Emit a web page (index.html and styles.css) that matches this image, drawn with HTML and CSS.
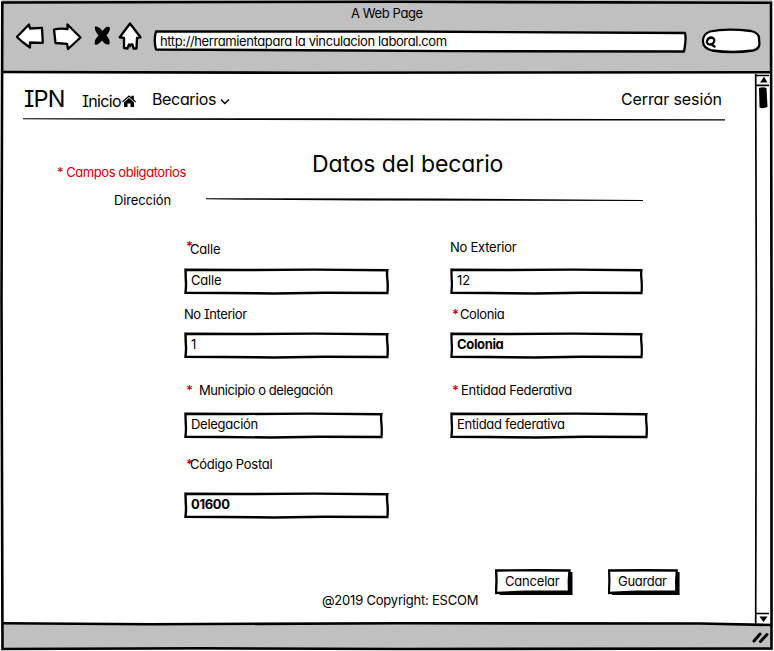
FILE: index.html
```html
<!DOCTYPE html>
<html lang="es">
<head>
<meta charset="utf-8">
<title>Datos del becario</title>
<link rel="stylesheet" href="styles.css">
</head>
<body>
<svg class="defs" width="0" height="0">
  <symbol id="box" viewBox="0 0 205 27" preserveAspectRatio="none">
    <path class="sketch" d="M1.500 1.800 L60 2 L130 1.600 L203.300 2.200 Q202.700 6 203.500 13 Q204 19 203.400 25 L140 24.800 L90 25.500 L40 25 L1.500 24.800 Q2.400 16 1.800 12 Z"/>
  </symbol>
  <symbol id="btn" viewBox="0 0 78 26" preserveAspectRatio="none">
    <path d="M4 4 L77.500 3 V26 H4.500 Z"/>
    <path class="sketch" d="M1.200 1.500 L40 1.200 L74.500 1.500 L73.800 12 L74 22.500 L30 22.700 L1 24 L1.500 12 Z"/>
  </symbol>
</svg>
<div class="browser">
  <header class="chrome">
    <div class="title"><span class="t t-title">A Web Page</span></div>
    <div class="toolbar">
      <svg class="tools" viewBox="0 0 142 30" width="142" height="30">
        <path class="ink" d="M.8 15 L13 2.500 L14 6.500 L26 5.800 L26.800 20.800 L14 20.500 L14 25.500 L6.500 20 Z"/>
        <path class="ink" d="M38 7.500 Q44 6 51.500 7 L51.500 2.500 L64.500 15.500 L52 27 L51 21.800 L39.500 21 Z"/>
        <path d="M79 4.500 Q83 4 86.500 9 Q90 3.500 93.500 5 Q95 8 90.500 13.500 Q94.500 18 93.500 22 Q90 24 86 18.500 Q82 23.500 78.800 22.500 Q77.500 18.500 82.500 13.500 Q78 8 79 4.500 Z"/>
        <path class="ink" d="M114 1.500 L124.500 15.300 L121 16 L120.500 26.500 L117.500 26.500 L116.500 22.500 L115 22.500 L114 24 L113 22.500 L111.500 26.500 L108 26 L108 16 L103.800 15.300 Z"/>
      </svg>
      <div class="address">
        <svg class="skin" viewBox="0 0 535 23" preserveAspectRatio="none"><path class="ink" d="M3 1.500 L250 1.500 L532 3 Q533.500 8 531 21.500 L300 21.200 L200 20.500 L3 19.500 Q.5 10 3 1.500 Z"/></svg>
        <span class="t t-url">http://herramientapara la vinculacion laboral.com</span>
      </div>
      <svg class="search" viewBox="0 0 60 26" width="60" height="26">
        <path class="ink" d="M9 3.500 Q25 0 50 3 Q59 5 58 12 Q60 21 52 22.500 Q32 25.500 11 22.500 Q1.500 20 2 12.500 Q2 6 9 3.500 Z"/>
        <path class="ink" d="M6 13 Q7 9.500 10.500 9.500 Q14 10 13 14 Q11.500 16.500 8.500 16.500 Q5.500 16 6 13 Z M10.500 16.500 L13.500 18.500"/>
      </svg>
    </div>
  </header>
  <main class="page">
    <nav class="nav">
      <span class="t t-brand">IPN</span>
      <span class="t t-inicio">Inicio</span>
      <svg class="home" viewBox="0 0 14 12" width="14" height="12"><path d="M0 6.600 L7 .3 L9.300 2.300 V.8 H11.800 V4.600 L14 6.600 L13.200 7.500 L7 2.100 L.8 7.500 Z M2 7.500 L7 3.100 L12 7.500 V12 H8.500 V8.500 H5.500 V12 H2 Z"/></svg>
      <span class="t t-bec">Becarios</span>
      <svg class="chev" viewBox="0 0 10 7" width="10" height="7"><path d="M1 1.500 L4.800 5.500 L9 1.500"/></svg>
      <span class="t t-out">Cerrar sesión</span>
    </nav>
    <svg class="rule" viewBox="0 0 702 3" width="702" height="3"><path d="M0 .2 L300 .3 L702 1.300 V2.600 L350 2.300 L100 1.700 L0 1.200 Z"/></svg>
    <div class="heading">
      <span class="t t-req">* Campos obligatorios</span>
      <h1 class="t t-h1">Datos del becario</h1>
    </div>
    <div class="section">
      <span class="t t-dir">Dirección</span>
      <svg class="line" viewBox="0 0 437 4" width="437" height="4"><path d="M0 .2 L230 .6 L437 2 V3 L160 2.600 L40 1.800 L0 1.200 Z"/></svg>
    </div>
    <form class="form">
      <div class="field">
        <label class="label label-calle"><i class="star star-up">*</i><span class="t t-calle">Calle</span></label>
        <div class="input w205"><svg class="skin"><use href="#box"/></svg><span class="t t-calle">Calle</span></div>
      </div>
      <div class="field">
        <label class="label label-ext"><span class="t t-ext">No Exterior</span></label>
        <div class="input w193"><svg class="skin"><use href="#box"/></svg><span class="t t-12">12</span></div>
      </div>
      <div class="field">
        <label class="label label-r2"><span class="t t-int">No Interior</span></label>
        <div class="input w205"><svg class="skin"><use href="#box"/></svg><span class="t t-1">1</span></div>
      </div>
      <div class="field">
        <label class="label label-r2"><i class="star star-col">*</i><span class="t t-col">Colonia</span></label>
        <div class="input w193"><svg class="skin"><use href="#box"/></svg><span class="t t-colb">Colonia</span></div>
      </div>
      <div class="field">
        <label class="label label-r3"><i class="star star-mun">*</i><span class="t t-mun">Municipio o delegación</span></label>
        <div class="input w199"><svg class="skin"><use href="#box"/></svg><span class="t t-del">Delegación</span></div>
      </div>
      <div class="field">
        <label class="label label-r3"><i class="star star-ent">*</i><span class="t t-ent">Entidad Federativa</span></label>
        <div class="input w198"><svg class="skin"><use href="#box"/></svg><span class="t t-entf">Entidad federativa</span></div>
      </div>
      <div class="field">
        <label class="label label-r4"><i class="star star-cod">*</i><span class="t t-cod">Código Postal</span></label>
        <div class="input w205"><svg class="skin"><use href="#box"/></svg><span class="t t-cp">01600</span></div>
      </div>
    </form>
    <footer class="footer">
      <span class="t t-copy">@2019 Copyright: ESCOM</span>
      <div class="button cancel"><svg class="skin"><use href="#btn"/></svg><span class="t t-can">Cancelar</span></div>
      <div class="button save"><svg class="skin"><use href="#btn"/></svg><span class="t t-gua">Guardar</span></div>
    </footer>
  </main>
  <div class="status"></div>
  <svg class="frame" viewBox="0 0 774 651" width="774" height="651">
    <path class="edge" d="M2.300 2.500 L400 1.800 L771 2.800 L771.500 300 L771.500 648.500 L400 649 L200 648.300 L2.500 649 L1.500 300 Z"/>
    <path class="edge" d="M2 72 L300 72.700 L771 72.300 M2 623.200 L150 624.200 L400 623.300 L700 623.500 L771 625"/>
    <path class="thin" d="M755.700 74 L756.300 300 L755.700 624 M756 75.500 H769 M756 85.300 H769 M756 613.500 H769"/>
    <path d="M764 76.800 L767.500 82.500 H760 Z M759.500 616.500 H767.500 L763.500 622 Z M759 88 Q763 86.500 766.500 88 L767.500 107 Q763 109 759.500 107.500 Z"/>
    <path class="grip" d="M754 641 L760 634 M760.500 641.500 L767 634.500"/>
  </svg>
</div>
</body>
</html>
```
FILE: styles.css
```css
* { box-sizing: border-box; }
body { margin: 0; background: #fff; color: #000; font: 13px/16px Inter, "Liberation Sans", sans-serif; font-feature-settings: "cv11", "cv08", "ss03"; }
.defs { position: absolute; }
.browser { position: relative; width: 774px; height: 651px; overflow: hidden; }
.t { white-space: nowrap; font-style: normal; }
.sketch { fill: #fff; stroke: #000; stroke-width: 2.4; }
.ink { fill: #fff; stroke: #000; stroke-width: 2.3; stroke-linejoin: round; stroke-linecap: round; }
.edge { fill: none; stroke: #000; stroke-width: 2.6; }
.thin { fill: none; stroke: #000; stroke-width: 1.7; }
.grip { fill: none; stroke: #000; stroke-width: 3; stroke-linecap: round; }
.frame { position: absolute; inset: 0; }
.skin { position: absolute; inset: 0; width: 100%; height: 100%; }

.chrome { height: 72px; background: #c0c0c0; margin: 0 2px; padding-top: 5px; }
.title { height: 17px; padding-left: 349px; }
.t-title { letter-spacing: -.4px; }
.toolbar { display: flex; align-items: flex-start; padding-left: 14px; }
.tools { margin-right: -5px; }
.address { position: relative; width: 535px; height: 23px; margin-top: 8px; padding: 3px 0 0 7px; }
.address .t { position: relative; }
.t-url { letter-spacing: -.39px; }
.search { margin: 6px 0 0 13px; }

.page { height: 552px; width: 754px; }
.nav { display: flex; height: 44px; padding-left: 24px; align-items: flex-start; }
.t-brand { font-size: 23.5px; letter-spacing: -.8px; line-height: 30px; margin-top: 12px; width: 58px; }
.t-inicio, .t-bec, .t-out { font-size: 16px; line-height: 20px; }
.t-inicio { margin-top: 19px; width: 40px; letter-spacing: -.7px; }
.home { margin-top: 23px; }
.t-bec { margin: 17px 0 0 16px; width: 68px; letter-spacing: -.35px; }
.chev { margin-top: 26px; }
.chev path { fill: none; stroke: #000; stroke-width: 1.4; }
.t-out { margin: 17px 0 0 391px; letter-spacing: -.12px; }
.rule { display: block; margin: 2px 0 0 23px; }
.heading { display: flex; align-items: flex-start; height: 71px; padding: 0 0 0 57px; }
.t-req { color: #c00; margin-top: 43px; width: 255px; letter-spacing: -.44px; }
.t-h1 { margin: 29px 0 0; font-size: 23px; line-height: 28px; font-weight: 400; letter-spacing: -.1px; }
.section { display: flex; height: 44px; padding-left: 114px; }
.t-dir { width: 92px; letter-spacing: -.15px; }
.line { margin-top: 6px; }

.form { display: grid; grid-template-columns: 266px 200px; grid-template-rows: 59px 64px 80px 80px; padding-left: 184px; }
.field { display: flex; flex-direction: column; justify-content: flex-end; align-items: flex-start; }
.label { display: flex; height: 16px; }
.label-calle { margin-bottom: 11px; }
.label-ext { margin-bottom: 13px; }
.label-r2 { margin-bottom: 10px; }
.label-r3 { margin-bottom: 14px; }
.label-r4 { margin-bottom: 20px; }
.star { color: #c00; font-style: normal; font-weight: 600; padding-left: 2px; }
.star-up { width: 6px; margin-top: -3px; }
.star-cod { width: 6px; }
.star-mun { width: 15px; }
.star-col { width: 10px; }
.star-ent { width: 11px; }
.t-calle { letter-spacing: -.2px; }
.t-ext { letter-spacing: -.24px; }
.t-int { letter-spacing: -.42px; }
.t-col { letter-spacing: -.4px; }
.t-mun { letter-spacing: -.42px; }
.t-del { letter-spacing: -.27px; }
.t-ent { letter-spacing: -.27px; }
.t-entf { letter-spacing: -.3px; }
.t-cod { letter-spacing: -.28px; }
.input { position: relative; height: 27px; padding: 4px 0 0 7px; }
.input .t, .button .t { position: relative; }
.w193 { width: 193px; }
.w198 { width: 198px; }
.w199 { width: 199px; }
.w205 { width: 205px; }
.t-colb, .t-cp { font-weight: 700; letter-spacing: -.35px; }

.footer { display: flex; align-items: flex-start; padding: 50px 0 0 322px; }
.t-copy { margin-top: 23px; width: 173px; letter-spacing: -.21px; }
.button { position: relative; height: 26px; padding: 4px 0 0 10px; }
.t-can { letter-spacing: -.2px; }
.t-gua { letter-spacing: -.32px; }
.cancel { width: 78px; }
.save { width: 72px; margin-left: 35px; }
.status { height: 26px; background: #c0c0c0; margin: 0 2px; }
```
